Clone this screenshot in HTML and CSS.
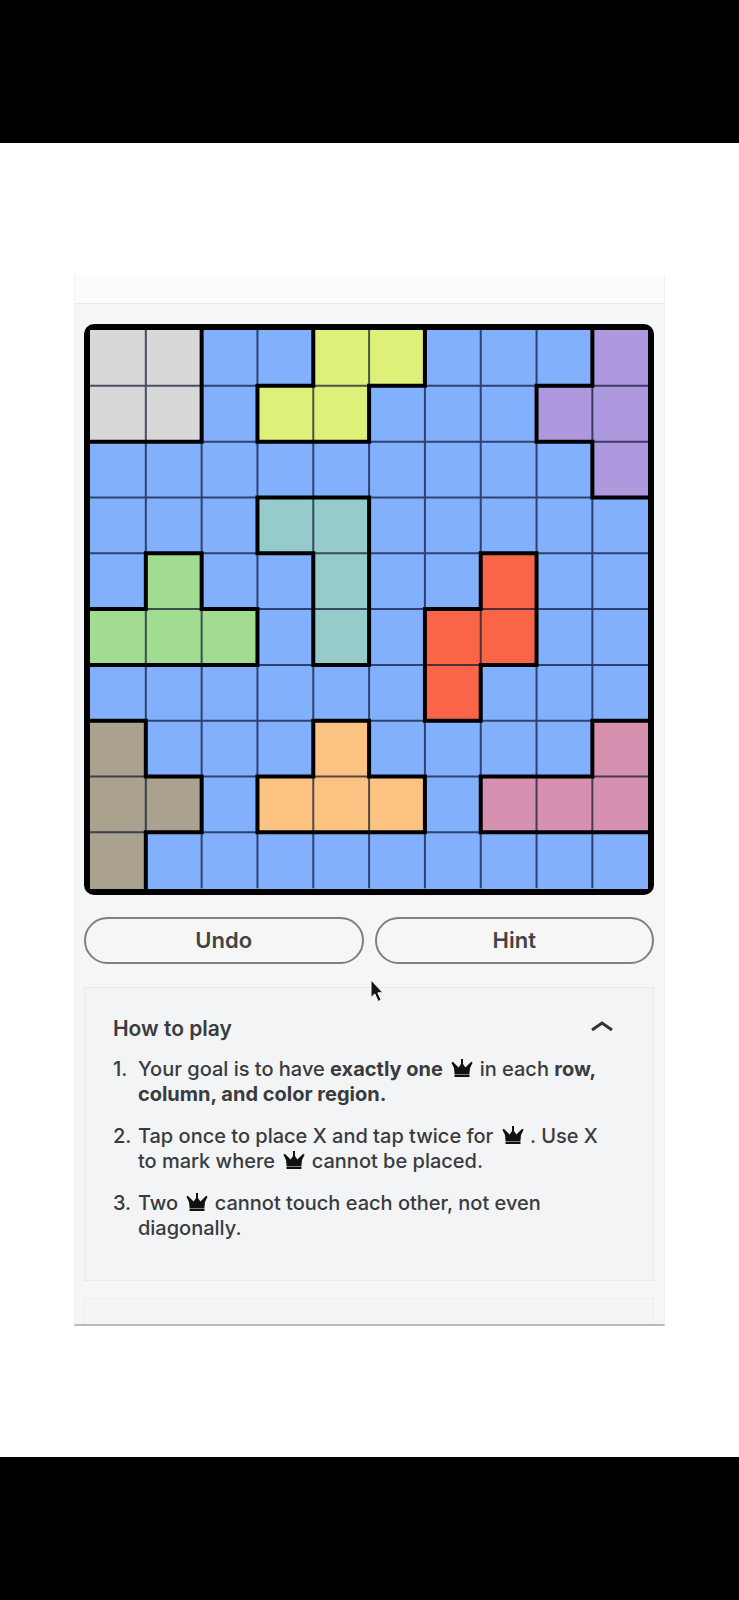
FILE: index.html
```html
<!DOCTYPE html>
<html lang="en">
<head>
<meta charset="utf-8">
<meta name="viewport" content="width=device-width, initial-scale=1">
<title>Queens</title>
<link rel="stylesheet" href="styles.css">
</head>
<body>
<svg class="symbols" aria-hidden="true">
  <symbol id="crown" viewBox="0 0 22 20">
    <path d="M3.500 16.500h15v2.500h-15z"/>
    <path d="M3.600 16.100L3 10 0.400 4.800 1.800 3.800 7.600 9.600 10 6V1h2v5l2.400 3.600L20.200 3.800l1.400 1-2.600 5.200-0.600 6.100z"/>
  </symbol>
</svg>
<div class="letterbox"></div>
<main class="stage">
  <section class="panel">
    <div class="topbar"></div>
    <div class="game">
      <div class="board" id="board">
        <svg class="lines" viewBox="0 0 10 10" preserveAspectRatio="none" aria-hidden="true">
          <path class="thin" id="thin"/>
          <path class="thick" id="thick"/>
        </svg>
      </div>
      <div class="actions">
        <button class="pill" type="button">Undo</button>
        <button class="pill" type="button">Hint</button>
      </div>
      <section class="card">
        <button class="card-head" type="button" aria-expanded="true">
          <span>How to play</span>
          <svg class="chevron" viewBox="0 0 22 12" aria-hidden="true"><path d="M1 10L11 3l10 7"/></svg>
        </button>
        <ol class="rules">
          <li>Your goal is to have <b>exactly one</b> <svg class="crown" role="img" aria-label="crown"><use href="#crown"/></svg> in each <b>row, column, and color region.</b></li>
          <li>Tap once to place X and tap twice for <svg class="crown" role="img" aria-label="crown"><use href="#crown"/></svg> . Use X to mark where <svg class="crown" role="img" aria-label="crown"><use href="#crown"/></svg> cannot be placed.</li>
          <li>Two <svg class="crown" role="img" aria-label="crown"><use href="#crown"/></svg> cannot touch each other, not even diagonally.</li>
        </ol>
      </section>
      <div class="next-card"></div>
    </div>
    <svg class="cursor" viewBox="0 0 14 24" aria-hidden="true"><path d="M1 1v17.500l3.800-3.600 3.400 7.600 3-1.400-3.300-7.300H13z"/></svg>
  </section>
</main>
<div class="letterbox"></div>
<script src="board.js"></script>
</body>
</html>
```
FILE: styles.css
```css
* {
  box-sizing: border-box;
}

body {
  margin: 0;
  min-height: 100vh;
  display: flex;
  flex-direction: column;
  background: #fff;
  color: #3a3b3e;
  font-family: Inter, "Liberation Sans", sans-serif;
}

button {
  font-family: inherit;
  color: inherit;
  cursor: pointer;
}

.symbols {
  position: absolute;
  width: 0;
  height: 0;
}

.letterbox {
  flex: 1 0 143px;
  background: #000;
}

.stage {
  padding: 132px 0 131px;
}

.panel {
  position: relative;
  width: 80%;
  margin: 0 auto;
  background: #f5f6f7;
  border: 1px solid #f0f0f0;
  border-top: 0;
  border-bottom: 2px solid #b9babb;
}

.topbar {
  height: 29px;
  background: #fbfbfb;
  border-bottom: 1px solid #e9e9e9;
}

.game {
  padding: 20px 10px 0 9px;
}

.board {
  position: relative;
  display: grid;
  grid-template-columns: repeat(10, 1fr);
  grid-template-rows: repeat(10, 1fr);
  aspect-ratio: 1;
  border: 6px solid #000;
  border-radius: 10px;
  background: #000;
}

.cell {
  min-width: 0;
  padding: 0;
  border: 0;
}

.blue { background: #83b0fd; }
.grey { background: #d8d8d8; }
.lime { background: #def079; }
.purple { background: #ae98de; }
.teal { background: #95cccb; }
.green { background: #a2dc91; }
.red { background: #fb6547; }
.taupe { background: #aaa28e; }
.orange { background: #fcc281; }
.pink { background: #d791b0; }

.lines {
  position: absolute;
  inset: 0;
  width: 100%;
  height: 100%;
  overflow: visible;
  pointer-events: none;
}

.lines path {
  fill: none;
  stroke: #000;
  vector-effect: non-scaling-stroke;
}

.lines .thin {
  stroke: #0a1433;
  stroke-opacity: 0.7;
  stroke-width: 2px;
}

.lines .thick {
  stroke-width: 4px;
  stroke-linecap: square;
}

.actions {
  display: grid;
  grid-template-columns: 1fr 1fr;
  gap: 11px;
  padding: 22px 0 23px;
}

.pill {
  height: 47px;
  border: 2px solid #808080;
  border-radius: 24px;
  background: #f6f6f6;
  color: #444;
  font-size: 22px;
  font-weight: 600;
}

.card {
  padding: 27px 28px 39px;
  border: 1px solid #e8eaec;
  background: #f3f4f6;
}

.card-head {
  display: flex;
  justify-content: space-between;
  align-items: flex-start;
  width: 100%;
  padding: 0 12px 0 0;
  border: 0;
  background: none;
  font-size: 21px;
  line-height: 27px;
  font-weight: 600;
}

.chevron {
  width: 22px;
  height: 12px;
  margin-top: 5px;
  fill: none;
  stroke: #333;
  stroke-width: 3px;
}

.rules {
  margin: 0;
  padding: 15px 10px 0 0;
  list-style: none;
  counter-reset: rule;
  font-size: 20px;
  line-height: 25px;
  font-weight: 500;
}

.rules li {
  padding-left: 25px;
  counter-increment: rule;
}

.rules li::before {
  content: counter(rule) ".";
  float: left;
  margin-left: -25px;
}

.rules li + li {
  margin-top: 17px;
}

.rules b {
  font-weight: 700;
}

.crown {
  width: 22px;
  height: 20px;
  margin: 0 1px 0 3px;
  vertical-align: -2px;
  fill: #111;
}

.next-card {
  height: 26px;
  margin-top: 17px;
  border: 1px solid #eceeef;
  border-bottom: 0;
  background: #f4f5f7;
}

.cursor {
  position: absolute;
  left: 50%;
  top: 704px;
  width: 14px;
  height: 24px;
  fill: #151515;
  stroke: #fff;
  stroke-width: 1px;
}
```
FILE: board.js
```js
const regions = {
  B: "blue", A: "grey", Y: "lime", P: "purple", T: "teal",
  G: "green", R: "red", K: "taupe", O: "orange", M: "pink"
};

const map = [
  "AABBYYBBBP",
  "AABYYBBBPP",
  "BBBBBBBBBP",
  "BBBTTBBBBB",
  "BGBBTBBRBB",
  "GGGBTBRRBB",
  "BBBBBBRBBB",
  "KBBBOBBBBM",
  "KKBOOOBMMM",
  "KBBBBBBBBB"
];

const board = document.getElementById("board");
const lines = board.querySelector(".lines");
let thin = "";
let thick = "";

map.forEach((row, y) => {
  [...row].forEach((key, x) => {
    const cell = document.createElement("button");
    cell.type = "button";
    cell.className = "cell " + regions[key];
    cell.setAttribute("aria-label", `Row ${y + 1}, column ${x + 1}, ${regions[key]}`);
    board.insertBefore(cell, lines);

    if (x < 9) {
      const edge = `M${x + 1} ${y}v1`;
      if (row[x + 1] === key) thin += edge; else thick += edge;
    }
    if (y < 9) {
      const edge = `M${x} ${y + 1}h1`;
      if (map[y + 1][x] === key) thin += edge; else thick += edge;
    }
  });
});

document.getElementById("thin").setAttribute("d", thin);
document.getElementById("thick").setAttribute("d", thick);
```
